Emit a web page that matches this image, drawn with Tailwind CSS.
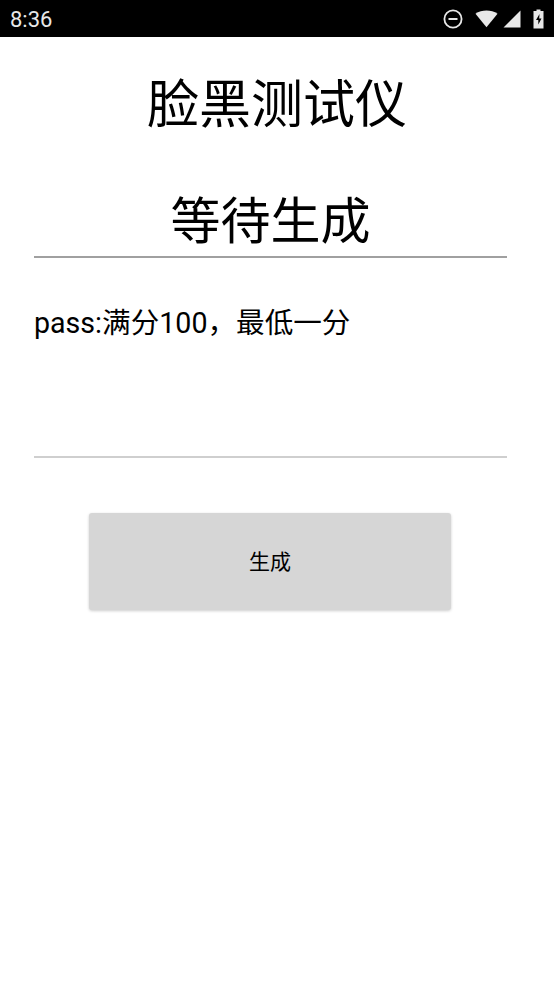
<!DOCTYPE html>
<html lang="zh">
<head>
    <meta charset="UTF-8">
    <meta name="viewport" content="width=device-width, initial-scale=1.0">
    <title>脸黑测试仪</title>
    <script src="https://cdn.jsdelivr.net/npm/@tailwindcss/browser@4"></script>
</head>
<body class="bg-white h-[985px] overflow-hidden font-['Roboto','Noto_Sans_CJK_SC',sans-serif]">
    <!-- Status bar -->
    <div class="h-[37px] bg-black flex items-center justify-between pl-[10px] pr-[10px]">
        <span class="text-[22px] leading-none text-[#e8e8e8] pt-[2px]">8:36</span>
        <div class="flex items-center">
            <svg class="w-[20px] h-[20px] mr-[12px]" viewBox="0 0 20 20" fill="none" stroke="#e8e8e8">
                <circle cx="10" cy="10" r="8.6" stroke-width="1.8"/>
                <path d="M5.500 10h9" stroke-width="2"/>
            </svg>
            <svg class="w-[23px] h-[18px] mr-[5px]" viewBox="0 0 24 18" fill="#e8e8e8">
                <path d="M0.500 3.500C7 -1 17 -1 23.500 3.500L12 17.500Z"/>
            </svg>
            <svg class="w-[18px] h-[18px] mr-[12px]" viewBox="0 0 18 18" fill="#e8e8e8">
                <path d="M17.500 0.500V17.500H0.500Z"/>
            </svg>
            <svg class="w-[11px] h-[20px]" viewBox="0 0 11 20" fill="#e8e8e8">
                <path fill-rule="evenodd" d="M3.500 0.500h4v1.500h3v17.500h-10V2h3ZM6.500 5L3 11h2.300v4.500L8.500 9.500H6.200Z"/>
            </svg>
        </div>
    </div>

    <h1 class="text-[52px] leading-[72px] text-black text-center mt-[33px]">脸黑测试仪</h1>

    <!-- Result field -->
    <div class="ml-[34px] mr-[47px] mt-[46px] h-[70px] border-b-2 border-[#a0a0a0] flex items-end justify-center pb-[1px]">
        <span class="text-[50px] leading-[66px] text-black">等待生成</span>
    </div>

    <!-- Info field -->
    <div class="ml-[34px] mr-[47px] mt-[46px] h-[154px] border-b-2 border-[#cfcfcf] text-[28.6px] leading-[38px] text-black">pass:满分100，最低一分</div>

    <button class="block ml-[89px] mt-[55px] w-[362px] h-[97px] pt-[2px] bg-[#d6d6d6] rounded-[3px] shadow-[0_1px_3px_rgba(0,0,0,0.2)] text-[21px] text-black">生成</button>
</body>
</html>
